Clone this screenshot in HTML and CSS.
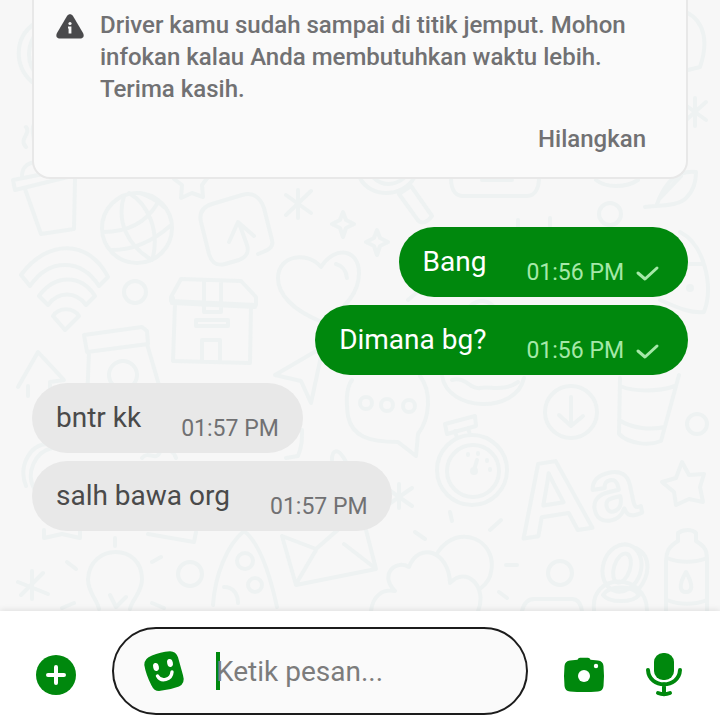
FILE: index.html
```html
<!DOCTYPE html>
<html lang="id">
<head>
  <meta charset="UTF-8" />
  <meta name="viewport" content="width=device-width, initial-scale=1" />
  <title>Chat Driver</title>
  <link rel="stylesheet" href="styles.css">
</head>
<body>
  <main class="chat">
    <svg class="wallpaper" viewBox="0 0 720 611" preserveAspectRatio="xMidYMin slice" aria-hidden="true">
      <!-- coin and hook on the left edge -->
      <path d="M34 24c-20 14-20 42-2 58M38 32c-12 12-12 32 0 44M26 127c6 6-8 12 0 20M34 124c-4 8 2 14 0 26" />
      <!-- cup -->
      <path d="M13 180l66-13 1 7-65 16zM22 178c-1-12 8-18 20-15M25 189l16 45 33-5 1-50" />
      <!-- globe -->
      <circle cx="137" cy="228" r="35" />
      <path d="M124 196c-8 26 4 50 28 64M129 193c20 12 30 38 24 64M103 232c22 0 42-8 54-28M112 250c22 0 42-10 58-24M140 193c10 4 18 8 24 14" />
      <!-- stars -->
      <path d="M174 179l8 6-1 13 11-5 11 4-1-12 6-8M343 212l3 8 8 4-8 4-3 9-3-9-8-4 8-4zM377 230l3 8 8 4-8 4-3 9-3-9-8-4 8-4z" />
      <path d="M682 462l7 13 15-1-4 13 3 15-14-3-13 6-2-13-12-10 14-4z" />
      <!-- share arrow -->
      <path d="M258 254c10-4 16-6 14-14l-8-32c-4-12-12-16-22-13l-30 9c-10 3-13 9-11 18l8 32c3 10 8 12 16 10l14-4c8-3 10-9 8-15l-8-22M229 242l9-20 16 14" />
      <!-- sparks -->
      <path d="M298 190v28M286 195l25 18M311 191l-25 24M399 484v24M389 490l23 16M412 488l-23 16M32 571v28M18 582l30 12M43 573l-22 22M695 98v28M684 104l22 16M706 102l-22 20" />
      <!-- wifi -->
      <path d="M21 275c26-36 68-36 87 2l-9 9c-18-28-50-28-69 0zM39 296c16-22 42-22 56 0l-9 9c-10-14-28-14-38 0zM53 316c6-9 20-9 26 0l-14 14z" />
      <circle cx="135" cy="292" r="11" />
      <!-- box -->
      <path d="M171 297l10-18 60 2 15 16v8l-85-4zM173 298l-1 5 83 4M175 303l-2 58 77 2 1-57M204 281v31h17v-31M196 320h32v6h-32zM202 360v-20h18v21" />
      <!-- heart -->
      <path d="M322 322c-30-12-44-28-44-44 0-22 28-28 43-11 14-22 38-18 38 6 0 20-14 36-37 49zM336 264c7 2 10 6 11 14" />
      <!-- shopping bag -->
      <path d="M84 335l58-8 5 4 1 13-61 8zM89 352l-2 50M147 344l14 48M18 387l20-35 26 28-14 2v12M28 396v-10z" />
      <circle cx="123" cy="375" r="14" />
      <!-- paper planes -->
      <path d="M275 375l48-28-12 56-10-22zM286 458l12-2c4-10 4-16 4-26M332 460c0-10 6-14 14 2M26 486c-8-20 4-42 22-42M34 488c-8-14 0-36 18-40M142 458c6-8 14 4 18-6 8-6 14 0 16 6" />
      <!-- magnifier -->
      <path d="M360 178c10 20 42 20 54 0M374 178c8 8 20 8 30 0M399 194l12-8 21 30c-6 8-12 8-15 3z" />
      <!-- scroll, plate and leaf -->
      <path d="M451 178c0 14 6 18 12 18h64c8 0 12-8 12-18M482 180h30M596 180c10 8 30 8 42 0M645 207c12-2 34 0 42-10 8-8 9-20 9-25-18-2-30 8-39 32M660 198l21-22M686 12c20 10 22 32 14 55l-12 3M518 220v8M550 218v8" />
      <circle cx="610" cy="214" r="11" />
      <!-- helmet and plate behind the bubbles -->
      <path d="M680 232c24 12 34 54 24 80-14 2-30-6-44-12M688 264h14M408 300l14-12M470 306c10-8 20-6 26 4" />
      <circle cx="690" cy="288" r="2" />
      <!-- speech bubble -->
      <path d="M352 380c-6 8-6 22-4 36 4 20 20 26 50 26l18 14 2-22c12-16 14-42 2-58" />
      <circle cx="366" cy="403" r="6" />
      <circle cx="387" cy="405" r="6" />
      <circle cx="409" cy="406" r="6" />
      <!-- burger -->
      <path d="M442 376c6 36 74 38 82 2M452 380c14-4 18 10 28 8s24 4 38-6" />
      <!-- download -->
      <circle cx="571" cy="412" r="26" />
      <path d="M571 397v27M559 415l12 11 12-10" />
      <!-- glass -->
      <path d="M620 378l-1 56c10 10 30 12 42 7l18-66M620 386c14 6 38 6 55 0M619 420c14 9 32 10 46 7" />
      <circle cx="697" cy="424" r="10" />
      <!-- stopwatch -->
      <path d="M445 424l30-8 1 10-29 8zM455 431l2 7M468 428l2 7M474 470l3-10" />
      <circle cx="472" cy="470" r="35" />
      <circle cx="473" cy="471" r="26" />
      <circle cx="474" cy="471" r="2" />
      <path d="M468 454v1M478 453v1M487 460v1M490 469v1" />
      <!-- lettering -->
      <text x="521" y="539" font-size="104" transform="rotate(-9 521 539)">A</text>
      <text x="595" y="523" font-size="86" transform="rotate(-12 595 523)">a</text>
      <!-- sun and cloud -->
      <path d="M371 611c2-16 12-22 24-20-16-16 0-32 14-24 10-26 40-16 41 16 16-18 38 4 28 28M438 552c20-30 60-12 53 20-1 8-5 12-10 16M450 512l2 9M415 532l10 7M490 530l11-10M506 565h11M499 592l8 6" />
      <!-- envelope -->
      <path d="M282 536l14 49 80-16-10-39M282 536l34 13 33-29M296 584l20-34M344 544l31 24" />
      <!-- rocket and ribbon -->
      <path d="M213 605c2-30 14-60 31-74 16 12 26 44 33 76M224 587c10 0 14 8 14 16M44 530v8l18-4 18 4v-8M148 534l46 8 2-10" />
      <circle cx="245" cy="561" r="8" />
      <circle cx="255" cy="585" r="7" />
      <circle cx="190" cy="574" r="12" />
      <!-- light bulb -->
      <path d="M99 609c-2-10-11-16-11-30 2-36 54-36 54 0 0 14-10 20-12 30M110 595l6 12 10-10M115 538v8M67 562l9 7M152 562l9-5M62 608l12-5M152 603l12 5" />
      <!-- reels -->
      <ellipse cx="622" cy="568" rx="19" ry="24" transform="rotate(18 622 568)" />
      <ellipse cx="622" cy="568" rx="8" ry="15" transform="rotate(18 622 568)" />
      <path d="M636 548c16 8 14 28 2 42M594 610c-4-38 52-38 53 0M603 595c6-10 30-10 36 0-6 8-30 8-36 0" />
      <circle cx="560" cy="573" r="12" />
      <path d="M522 611c2-8 6-12 12-12h38c6 0 9 6 10 12" />
      <!-- bottle -->
      <path d="M678 541v-8c6-4 14-4 18 0v8c10 6 11 10 11 20v50M678 541c-10 6-12 12-12 20v50M667 558c12 5 28 5 40 0M667 600c12 5 28 5 40 0M686 572c8 14 6 20 0 20s-8-6 0-20z" />
    </svg>

    <section class="notice">
      <div class="notice-body">
        <svg class="notice-icon" viewBox="0 0 28 26" aria-hidden="true">
          <path d="M11 2c1.500-2.200 4.500-2.200 6 0l10 17c1.500 3 .5 5.500-3 5.500H4c-3.500 0-4.500-2.500-3-5.500z" fill="#4a4a4c" />
          <circle cx="14" cy="9.500" r="1.600" fill="#fafafa" />
          <path d="M12 12.500h3.400v7h-2.800v-5H12z" fill="#fafafa" />
        </svg>
        <p>Driver kamu sudah sampai di titik jemput. Mohon infokan kalau Anda membutuhkan waktu lebih. Terima kasih.</p>
      </div>
      <button class="dismiss" type="button">Hilangkan</button>
    </section>

    <div class="messages">
      <div class="bubble sent">
        <span class="text">Bang</span>
        <time>01:56 PM</time>
        <svg class="check" viewBox="0 0 32 32" role="img" aria-label="Terkirim"><path d="M6 16l7 6 12-11" /></svg>
      </div>
      <div class="bubble sent">
        <span class="text">Dimana bg?</span>
        <time>01:56 PM</time>
        <svg class="check" viewBox="0 0 32 32" role="img" aria-label="Terkirim"><path d="M6 16l7 6 12-11" /></svg>
      </div>
      <div class="bubble received">
        <span class="text">bntr kk</span>
        <time>01:57 PM</time>
      </div>
      <div class="bubble received">
        <span class="text">salh bawa org</span>
        <time>01:57 PM</time>
      </div>
    </div>
  </main>

  <form class="composer">
    <button class="icon-button" type="button" aria-label="Lampiran">
      <svg viewBox="0 0 40 40">
        <circle cx="20" cy="20" r="20" fill="#00880d" />
        <path d="M20 12v16M12 20h16" stroke="#fff" stroke-width="4" stroke-linecap="round" />
      </svg>
    </button>
    <div class="field">
      <button class="sticker-button" type="button" aria-label="Stiker">
        <svg viewBox="0 0 40 40">
          <path d="M8 4.500Q16 1 26 .3q6 0 8 6l5 18q2.500 8-4 11.200Q26 39 15 40q-5 0-7.500-5.500Q2 24 .3 14 0 7.500 8 4.500z" fill="#00880d" />
          <ellipse cx="12" cy="16" rx="2.800" ry="4" transform="rotate(-14 12 16)" fill="#fff" />
          <ellipse cx="26" cy="12" rx="2.800" ry="4" transform="rotate(-14 26 12)" fill="#fff" />
          <path d="M13.500 25c3.500 6.500 14 4 14.500-4" fill="none" stroke="#fff" stroke-width="3.400" stroke-linecap="round" />
        </svg>
      </button>
      <input type="text" class="message-input" placeholder="Ketik pesan..." aria-label="Ketik pesan" autocomplete="off" />
    </div>
    <div class="actions">
      <button class="icon-button" type="button" aria-label="Kamera">
        <svg viewBox="0 0 40 40">
          <path d="M6 5.500l7.500-.7c1-2 2-2 4-2h5c2 0 3 0 4 2l7.500.7q5 .5 5.500 5.500 1 10 0 20-.5 5-5.500 5.500-14 1.200-28 0Q1 36 .5 31q-1-10 0-20 .5-5 5.500-5.500z" fill="#00880d" />
          <circle cx="20" cy="21" r="6" fill="#fff" />
          <circle cx="32" cy="11" r="2.200" fill="#fff" />
        </svg>
      </button>
      <button class="icon-button" type="button" aria-label="Rekam suara">
        <svg viewBox="0 0 40 40">
          <rect x="10" y="-2" width="20" height="27" rx="9" fill="#00880d" />
          <path d="M4 15c1 19 31 19 32 0M20 29v9M14 38q6 2.500 12 0" fill="none" stroke="#00880d" stroke-width="4" stroke-linecap="round" />
        </svg>
      </button>
    </div>
  </form>
</body>
</html>
```
FILE: styles.css
```css
* {
  box-sizing: border-box;
}
body {
  margin: 0;
  min-height: 100vh;
  display: flex;
  flex-direction: column;
  background: #f7f7f7;
  font-family: Roboto, 'Liberation Sans', sans-serif;
}
button {
  border: none;
  background: none;
  padding: 0;
  font: inherit;
  cursor: pointer;
}
svg {
  display: block;
  overflow: visible;
}

/* chat */
.chat {
  position: relative;
  flex: 1;
  padding: 0 32px 80px;
  overflow: hidden;
}
.wallpaper {
  position: absolute;
  top: 0;
  left: 0;
  width: 100%;
  fill: none;
  stroke: #eef2f2;
  stroke-width: 4;
  stroke-linecap: round;
  stroke-linejoin: round;
  font-family: 'Liberation Sans', sans-serif;
  font-weight: bold;
}

/* notice card */
.notice {
  position: relative;
  padding: 9px 40px 22px 22px;
  display: flex;
  flex-direction: column;
  background: #fafafa;
  border: 2px solid #e8e8e8;
  border-top: none;
  border-radius: 0 0 18px 18px;
  color: #717173;
  font-size: 24px;
  font-weight: 500;
  line-height: 32px;
}
.notice-body {
  display: flex;
  gap: 16px;
}
.notice-body p {
  margin: 0;
}
.notice-icon {
  width: 28px;
  height: 26px;
  margin-top: 5px;
  flex-shrink: 0;
}
.dismiss {
  align-self: flex-end;
  margin-top: 18px;
  color: inherit;
}

/* messages */
.messages {
  position: relative;
  margin-top: 48px;
  display: flex;
  flex-direction: column;
  gap: 8px;
}
.bubble {
  display: flex;
  align-items: flex-end;
  padding: 16px 24px 8px;
  border-radius: 35px;
}
.bubble .text {
  margin-right: 40px;
  padding-bottom: 8px;
  font-size: 28px;
  line-height: 38px;
}
.bubble time {
  font-size: 23px;
  line-height: 32px;
}
.sent {
  align-self: flex-end;
  background: #00880d;
  color: #fff;
}
.sent time {
  color: #a5e8a8;
}
.received {
  align-self: flex-start;
  background: #e8e8e8;
  color: #4a4a4a;
}
.received time {
  color: #717173;
}
.check {
  width: 32px;
  height: 32px;
  margin-left: 8px;
  fill: none;
  stroke: #a5e8a8;
  stroke-width: 3;
  stroke-linecap: round;
  stroke-linejoin: round;
}

/* composer */
.composer {
  position: relative;
  display: flex;
  align-items: flex-end;
  gap: 36px;
  padding: 16px 36px 6px;
  background: #fff;
  box-shadow: 0 -1px 6px rgba(0, 0, 0, 0.1);
}
.icon-button {
  width: 40px;
  height: 40px;
  margin-bottom: 20px;
  flex-shrink: 0;
}
.field {
  flex: 1;
  min-width: 0;
  height: 88px;
  display: flex;
  align-items: center;
  gap: 32px;
  padding: 0 30px;
  background: #fafafa;
  border: 2px solid #1c1c1c;
  border-radius: 44px;
}
.sticker-button {
  width: 40px;
  height: 40px;
  flex-shrink: 0;
}
.message-input {
  flex: 1;
  min-width: 0;
  height: 38px;
  padding: 0;
  border: none;
  outline: none;
  background: linear-gradient(#00880d, #00880d) no-repeat left / 4px 100%;
  color: #4a4a4a;
  font-family: inherit;
  font-size: 28px;
}
.message-input::placeholder {
  color: #7c7c7c;
  opacity: 1;
}
.actions {
  display: flex;
  gap: 40px;
}
```
